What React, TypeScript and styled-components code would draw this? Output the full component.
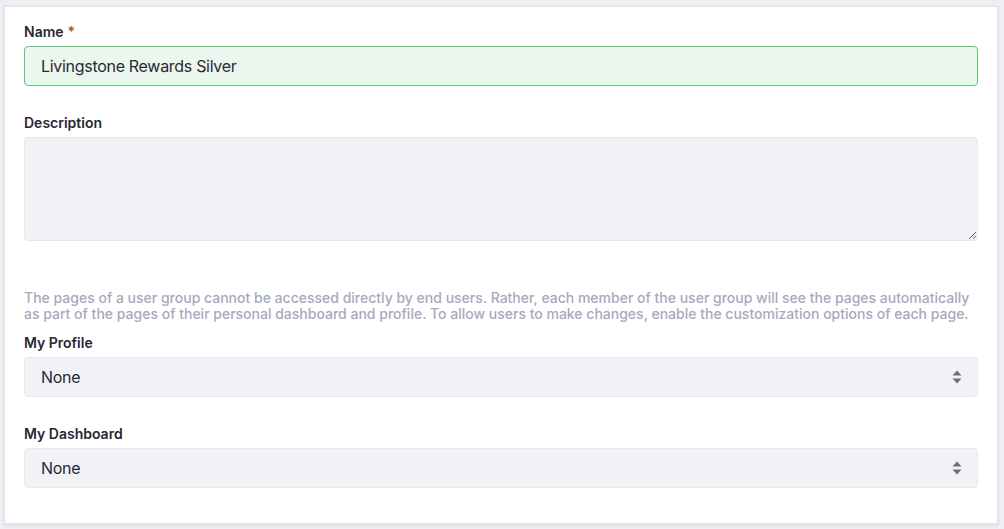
import { ReactElement } from 'react';
import styled, { createGlobalStyle } from 'styled-components';

const GlobalStyle = createGlobalStyle`
  html, body {
    margin: 0;
    padding: 0;
    background: #eeeff3;
    font-family: Inter, "Noto Sans", "Liberation Sans", sans-serif;
    color: #272833;
  }
  * {
    box-sizing: border-box;
  }
`;

const Page = styled.div`
  width: 1004px;
  height: 529px;
  padding: 6px 6px 5px 4px;
`;

const Card = styled.div`
  background: #ffffff;
  border: 1px solid #e2e3ea;
  box-shadow: 0 1px 3px rgba(39, 40, 51, 0.12);
  padding: 15px 19px 35px 19px;
  display: flex;
  flex-direction: column;
`;

const FormGroup = styled.div<{ $gap?: number }>`
  display: flex;
  flex-direction: column;
  margin-bottom: ${(p) => p.$gap ?? 27}px;
`;

const Label = styled.label`
  font-size: 14px;
  font-weight: 600;
  line-height: 20px;
  margin-bottom: 4px;
  color: #272833;
`;

const Required = styled.span`
  color: #b95000;
  margin-left: 4px;
`;

const TextInput = styled.input`
  height: 40px;
  width: 100%;
  border: 1px solid #5aca75;
  background: #ebf7ee;
  border-radius: 4px;
  padding: 0 16px;
  font-family: inherit;
  font-size: 16px;
  letter-spacing: -0.3px;
  color: #272833;
  outline: none;
`;

const TextArea = styled.textarea`
  height: 104px;
  width: 100%;
  border: 1px solid #e7e7ed;
  background: #f1f2f5;
  border-radius: 4px;
  padding: 8px 16px;
  font-family: inherit;
  font-size: 16px;
  resize: vertical;
  outline: none;
  display: block;
`;

const HelpText = styled.p`
  margin: 0 0 11px 0;
  font-size: 14px;
  font-weight: 500;
  line-height: 16px;
  color: #a7a9bc;
`;

const SelectBox = styled.div`
  height: 40px;
  width: 100%;
  border: 1px solid #e7e7ed;
  background: #f1f2f5;
  border-radius: 4px;
  padding: 0 16px;
  display: flex;
  align-items: center;
  justify-content: space-between;
  font-size: 16px;
  letter-spacing: -0.3px;
  color: #272833;
`;

const Caret = styled.svg`
  width: 10px;
  height: 16px;
  margin-right: -1px;
`;

const Select = ({ value }: { value: string }): ReactElement => (
  <SelectBox>
    <span>{value}</span>
    <Caret viewBox="0 0 10 16">
      <path d="M5 1.5 L9.5 6.5 H0.5 Z" fill="#6b6c7e" />
      <path d="M5 14.5 L9.5 9.5 H0.5 Z" fill="#6b6c7e" />
    </Caret>
  </SelectBox>
);

const App = (): ReactElement => (
  <>
    <GlobalStyle />
    <Page>
      <Card>
        <FormGroup>
          <Label>
            Name<Required>*</Required>
          </Label>
          <TextInput defaultValue="Livingstone Rewards Silver" />
        </FormGroup>

        <FormGroup $gap={49}>
          <Label>Description</Label>
          <TextArea />
        </FormGroup>

        <HelpText>
          The pages of a user group cannot be accessed directly by end users. Rather, each member of the user group
          will see the pages automatically as part of the pages of their personal dashboard and profile. To allow
          users to make changes, enable the customization options of each page.
        </HelpText>

        <FormGroup>
          <Label>My Profile</Label>
          <Select value="None" />
        </FormGroup>

        <FormGroup $gap={0}>
          <Label>My Dashboard</Label>
          <Select value="None" />
        </FormGroup>
      </Card>
    </Page>
  </>
);

export default App;
